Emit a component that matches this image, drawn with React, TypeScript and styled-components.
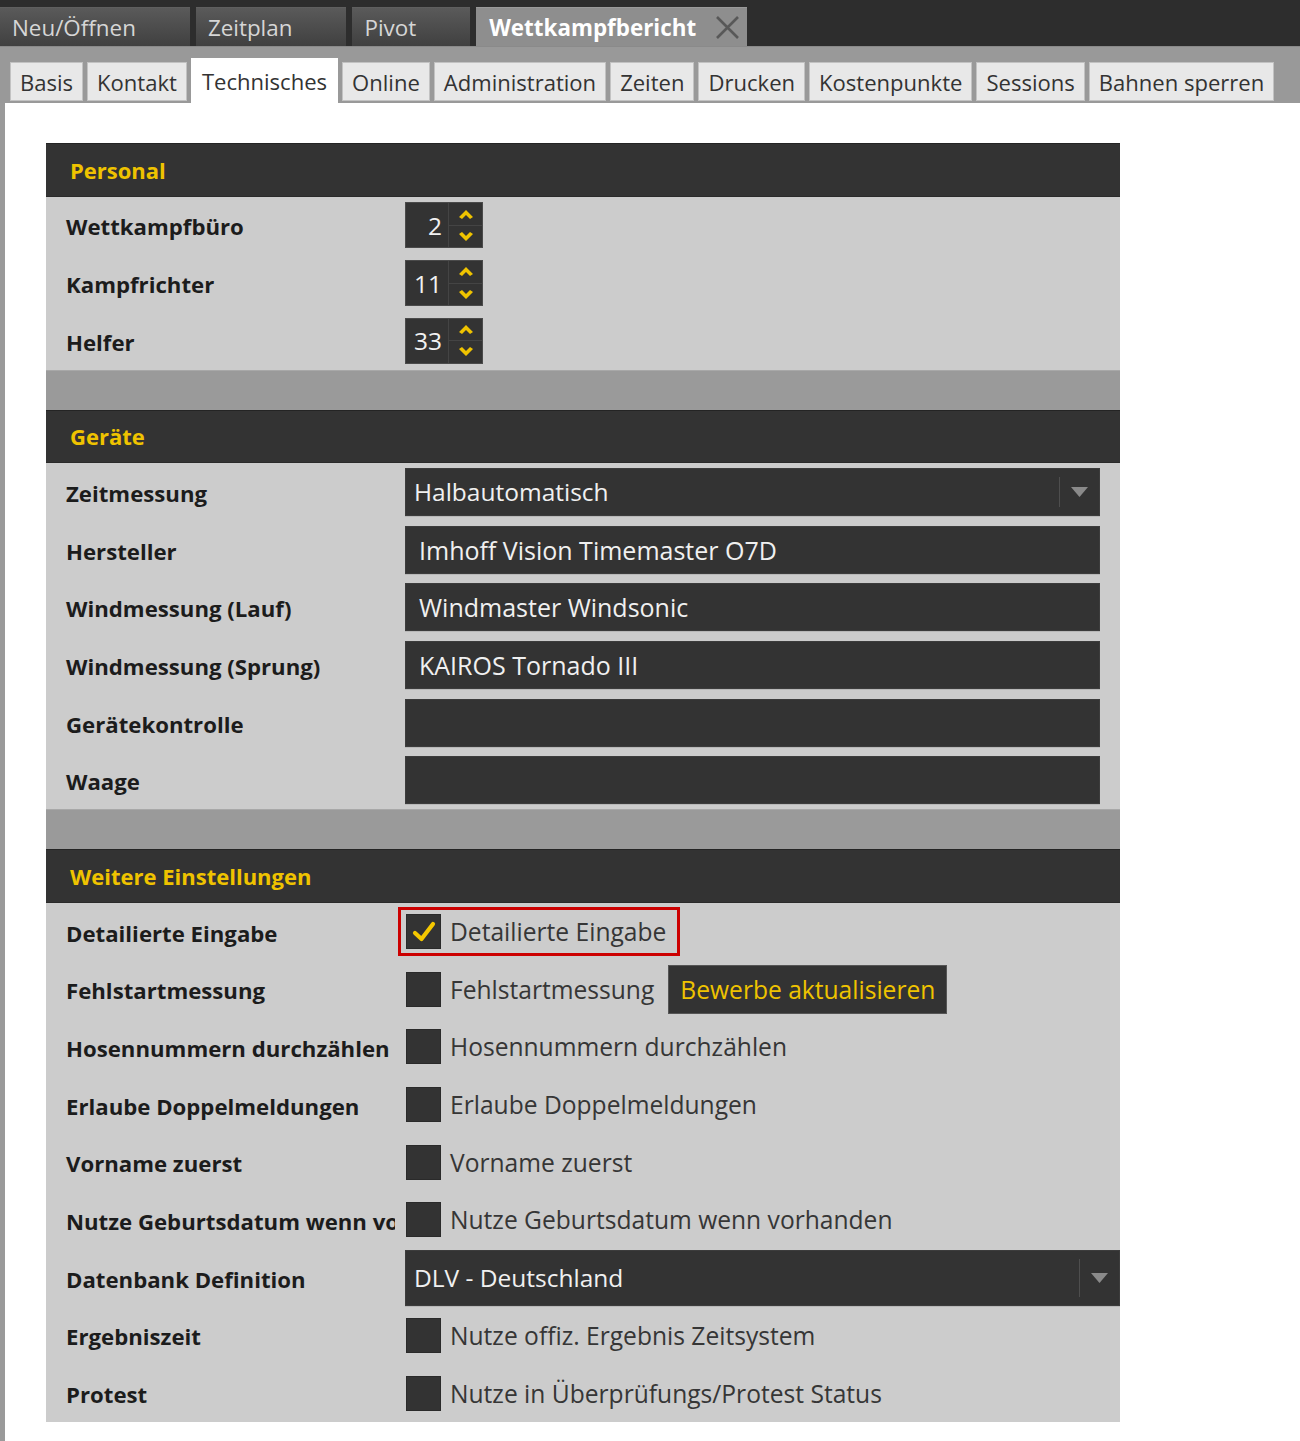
import React from "react";
import styled, { createGlobalStyle } from "styled-components";

const YELLOW = "#efc300";
const DARK = "#333333";

const GlobalStyle = createGlobalStyle`
  html, body { margin: 0; padding: 0; background: #ffffff; }
  body { font-family: "Open Sans", "Noto Sans", sans-serif; }
  * { box-sizing: border-box; }
`;

const Page = styled.div`
  width: 1300px;
  min-height: 1441px;
  display: flex;
  flex-direction: column;
  background: #fff;
`;

const TopBar = styled.div`
  height: 46px;
  background: #2d2d2d;
  display: flex;
  align-items: flex-end;
  gap: 6px;
`;

const TopTab = styled.div<{ $active?: boolean }>`
  height: 39px;
  display: flex;
  align-items: center;
  padding: ${(p) => (p.$active ? "0 7px 0 13px" : "0 54px 0 12px")};
  background: ${(p) =>
    p.$active ? "#8e8e8e" : "linear-gradient(#5a5a5a, #404040)"};
  border-top: 1px solid ${(p) => (p.$active ? "#9a9a9a" : "#5f5f5f")};
  color: ${(p) => (p.$active ? "#ffffff" : "#d6d6d6")};
  font-size: 22.4px;
  font-weight: ${(p) => (p.$active ? 700 : 400)};
  white-space: nowrap;
`;

const CloseIcon = styled.svg`
  width: 25px;
  height: 25px;
  margin-left: 19px;
  flex: none;
`;

const SubBar = styled.div`
  height: 57px;
  background: #999999;
  border-top: 1px solid #8a8a8a;
  display: flex;
  align-items: flex-end;
  gap: 4px;
  padding-left: 10px;
`;

const SubTab = styled.div<{ $active?: boolean }>`
  height: ${(p) => (p.$active ? "45px" : "39px")};
  margin-bottom: ${(p) => (p.$active ? "0" : "2px")};
  display: flex;
  align-items: center;
  padding: 0 ${(p) => (p.$active ? "11px" : "9px")};
  background: ${(p) => (p.$active ? "#ffffff" : "#e8e8e8")};
  border: ${(p) => (p.$active ? "none" : "1px solid #c2c2c2")};
  color: #333;
  font-size: 22.05px;
  white-space: nowrap;
`;

const Content = styled.div`
  flex: 1;
  border-left: 5px solid #9a9a9a;
  padding: 40px 0 19px 41px;
`;

const Panel = styled.div`
  width: 1074px;
  background: #cccccc;
  display: flex;
  flex-direction: column;
`;

const SectionHeader = styled.div`
  height: 53.5px;
  background: ${DARK};
  border-top: 1px solid #242424;
  border-bottom: 1px solid #2a2a2a;
  display: flex;
  align-items: center;
  padding-left: 24px;
  color: ${YELLOW};
  font-size: 22px;
  font-weight: 700;
`;

const Band = styled.div`
  height: 40px;
  background: #9a9a9a;
  border-top: 1px solid #a8a8a8;
`;

const Row = styled.div`
  height: 57.7px;
  display: grid;
  grid-template-columns: 349px 1fr;
  column-gap: 10px;
  align-items: center;
`;

const Label = styled.div`
  padding-left: 20px;
  padding-top: 3px;
  overflow: hidden;
  white-space: nowrap;
  color: #1c1c1c;
  font-size: 22.2px;
  font-weight: 700;
`;

const Field = styled.div<{ $wide?: boolean }>`
  padding-right: ${(p) => (p.$wide ? "0" : "20px")};
  display: flex;
  align-items: center;
  min-width: 0;
`;

const Spinner = styled.div`
  width: 78px;
  height: 46px;
  background: ${DARK};
  border: 1px solid #4a4a4a;
  display: flex;
`;

const SpinValue = styled.div`
  width: 42px;
  display: flex;
  align-items: center;
  justify-content: flex-end;
  padding-right: 6px;
  color: #f2f2f2;
  font-size: 24.5px;
`;

const SpinButtons = styled.div`
  flex: 1;
  display: flex;
  flex-direction: column;
  border-left: 1px solid #444;
`;

const SpinButton = styled.div<{ $top?: boolean }>`
  flex: 1;
  display: flex;
  align-items: center;
  justify-content: center;
  border-bottom: ${(p) => (p.$top ? "1px solid #444" : "none")};
`;

const TextBox = styled.div<{ $height?: number; $pad?: number }>`
  width: 100%;
  height: ${(p) => p.$height ?? 48}px;
  background: ${DARK};
  border: 1px solid #3c3c3c;
  box-shadow: 0 1px 0 #b8b8b8;
  display: flex;
  align-items: center;
  padding-left: ${(p) => p.$pad ?? 13}px;
  color: #f0f0f0;
  font-size: 25px;
  white-space: nowrap;
`;

const SelectText = styled.span`
  flex: 1;
  font-size: 24.5px;
`;

const SelectDivider = styled.span`
  width: 1px;
  align-self: stretch;
  margin: 8px 0;
  background: #4e4e4e;
`;

const SelectArrow = styled.span`
  width: 39px;
  display: flex;
  align-items: center;
  justify-content: center;
`;

const CheckWrap = styled.div<{ $highlight?: boolean }>`
  display: flex;
  align-items: center;
  gap: 9px;
  padding-left: 1px;
  padding-right: ${(p) => (p.$highlight ? "7px" : "0")};
  outline: ${(p) => (p.$highlight ? "3px solid #cc0000" : "none")};
  outline-offset: 4px;
`;

const Box = styled.div`
  width: 35px;
  height: 35px;
  background: ${DARK};
  border: 1px solid #2a2a2a;
  display: flex;
  align-items: center;
  justify-content: center;
  flex: none;
`;

const CheckText = styled.span`
  color: #363636;
  font-size: 24.6px;
  white-space: nowrap;
`;

const ActionButton = styled.div`
  margin-left: 14px;
  height: 49px;
  padding: 0 11px;
  display: flex;
  align-items: center;
  background: ${DARK};
  border: 1px solid #555;
  color: ${YELLOW};
  font-size: 24.6px;
  white-space: nowrap;
`;

const ArrowUp = () => (
  <svg width="14" height="9" viewBox="0 0 14 9">
    <path d="M7 0 L14 7 L11 9 L7 5 L3 9 L0 7 Z" fill={YELLOW} />
  </svg>
);
const ArrowDown = () => (
  <svg width="14" height="9" viewBox="0 0 14 9">
    <path d="M7 9 L14 2 L11 0 L7 4 L3 0 L0 2 Z" fill={YELLOW} />
  </svg>
);

const Tri = () => (
  <svg width="17" height="10" viewBox="0 0 17 10">
    <path d="M0 0 H17 L8.5 10 Z" fill="#8a8a8a" />
  </svg>
);

const NumberField = ({ value }: { value: string }) => (
  <Spinner>
    <SpinValue>{value}</SpinValue>
    <SpinButtons>
      <SpinButton $top>
        <ArrowUp />
      </SpinButton>
      <SpinButton>
        <ArrowDown />
      </SpinButton>
    </SpinButtons>
  </Spinner>
);

const Select = ({ value, height }: { value: string; height: number }) => (
  <TextBox $height={height} $pad={8}>
    <SelectText>{value}</SelectText>
    <SelectDivider />
    <SelectArrow>
      <Tri />
    </SelectArrow>
  </TextBox>
);

const Check = ({
  text,
  checked,
  highlight,
}: {
  text: string;
  checked?: boolean;
  highlight?: boolean;
}) => (
  <CheckWrap $highlight={highlight}>
    <Box>
      {checked && (
        <svg width="24" height="22" viewBox="0 0 24 22">
          <path
            d="M3 12 L9.5 18 L21 3"
            fill="none"
            stroke="#f5c800"
            strokeWidth="4.2"
            strokeLinecap="round"
            strokeLinejoin="round"
          />
        </svg>
      )}
    </Box>
    <CheckText>{text}</CheckText>
  </CheckWrap>
);

const topTabs = ["Neu/Öffnen", "Zeitplan", "Pivot"];
const subTabs = [
  "Basis",
  "Kontakt",
  "Technisches",
  "Online",
  "Administration",
  "Zeiten",
  "Drucken",
  "Kostenpunkte",
  "Sessions",
  "Bahnen sperren",
];

const personal = [
  ["Wettkampfbüro", "2"],
  ["Kampfrichter", "11"],
  ["Helfer", "33"],
];

const devices = [
  ["Hersteller", "Imhoff Vision Timemaster O7D"],
  ["Windmessung (Lauf)", "Windmaster Windsonic"],
  ["Windmessung (Sprung)", "KAIROS Tornado III"],
  ["Gerätekontrolle", ""],
  ["Waage", ""],
];

const checks: [string, string][] = [
  ["Hosennummern durchzählen", "Hosennummern durchzählen"],
  ["Erlaube Doppelmeldungen", "Erlaube Doppelmeldungen"],
  ["Vorname zuerst", "Vorname zuerst"],
  ["Nutze Geburtsdatum wenn vorhanden", "Nutze Geburtsdatum wenn vorhanden"],
];

export default function App() {
  return (
    <Page>
      <GlobalStyle />
      <TopBar>
        {topTabs.map((t) => (
          <TopTab key={t}>{t}</TopTab>
        ))}
        <TopTab $active>
          Wettkampfbericht
          <CloseIcon viewBox="0 0 25 25">
            <path
              d="M2 2 L23 23 M23 2 L2 23"
              stroke="#585858"
              strokeWidth="2.6"
              fill="none"
            />
          </CloseIcon>
        </TopTab>
      </TopBar>
      <SubBar>
        {subTabs.map((t) => (
          <SubTab key={t} $active={t === "Technisches"}>
            {t}
          </SubTab>
        ))}
      </SubBar>
      <Content>
        <Panel>
          <SectionHeader>Personal</SectionHeader>
          {personal.map(([l, v]) => (
            <Row key={l}>
              <Label>{l}</Label>
              <Field>
                <NumberField value={v} />
              </Field>
            </Row>
          ))}
          <Band />
          <SectionHeader>Geräte</SectionHeader>
          <Row>
            <Label>Zeitmessung</Label>
            <Field>
              <Select value="Halbautomatisch" height={48} />
            </Field>
          </Row>
          {devices.map(([l, v]) => (
            <Row key={l}>
              <Label>{l}</Label>
              <Field>
                <TextBox>{v}</TextBox>
              </Field>
            </Row>
          ))}
          <Band />
          <SectionHeader>Weitere Einstellungen</SectionHeader>
          <Row>
            <Label>Detailierte Eingabe</Label>
            <Field>
              <Check text="Detailierte Eingabe" checked highlight />
            </Field>
          </Row>
          <Row>
            <Label>Fehlstartmessung</Label>
            <Field>
              <Check text="Fehlstartmessung" />
              <ActionButton>Bewerbe aktualisieren</ActionButton>
            </Field>
          </Row>
          {checks.map(([l, t]) => (
            <Row key={l}>
              <Label>{l}</Label>
              <Field>
                <Check text={t} />
              </Field>
            </Row>
          ))}
          <Row>
            <Label>Datenbank Definition</Label>
            <Field $wide>
              <Select value="DLV - Deutschland" height={56} />
            </Field>
          </Row>
          <Row>
            <Label>Ergebniszeit</Label>
            <Field>
              <Check text="Nutze offiz. Ergebnis Zeitsystem" />
            </Field>
          </Row>
          <Row>
            <Label>Protest</Label>
            <Field>
              <Check text="Nutze in Überprüfungs/Protest Status" />
            </Field>
          </Row>
        </Panel>
      </Content>
    </Page>
  );
}
